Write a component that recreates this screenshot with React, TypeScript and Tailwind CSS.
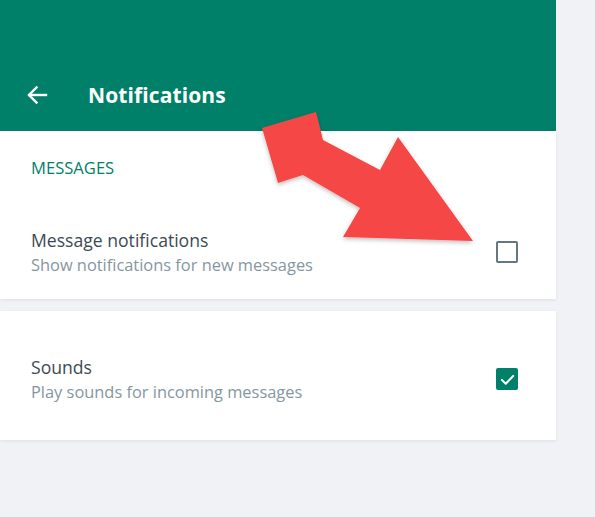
import React from "react";

function Checkbox({ checked }: { checked: boolean }) {
  if (checked) {
    return (
      <div className="w-[22px] h-[22px] rounded-[2px] bg-[#008069] flex items-center justify-center">
        <svg width="17" height="17" viewBox="0 0 24 24" fill="none" stroke="#fff" strokeWidth="2.8" strokeLinecap="round" strokeLinejoin="round">
          <path d="M4 12.5l5.5 5.5L20 7" />
        </svg>
      </div>
    );
  }
  return <div className="w-[22px] h-[22px] rounded-[2px] border-2 border-[#667781]" />;
}

function Row({ title, sub, checked }: { title: string; sub: string; checked: boolean }) {
  return (
    <div className="flex items-center pl-[31px] pr-[38px]">
      <div className="flex-1 flex flex-col">
        <div className="text-[17.6px] leading-[26px] text-[#3b4a54]">{title}</div>
        <div className="text-[16.4px] leading-[24px] text-[#8696a0]">{sub}</div>
      </div>
      <Checkbox checked={checked} />
    </div>
  );
}

export default function App() {
  return (
    <div
      className="relative w-[595px] h-[517px] bg-[#f0f2f5] overflow-hidden"
      style={{ fontFamily: '"Open Sans", "Noto Sans", sans-serif' }}
    >
      <div className="w-[556px] flex flex-col">
        <div className="h-[131px] bg-[#008069] flex items-end pb-[22px] pl-[26px]">
          <div className="flex items-center gap-[40px]">
            <svg width="22" height="20" viewBox="0 0 22 20" fill="none" stroke="#fff" strokeWidth="2.4" strokeLinecap="square">
              <path d="M20 10H3.5" />
              <path d="M10.5 2.5L3 10l7.5 7.5" />
            </svg>
            <div className="text-white text-[21px] font-bold leading-[28px] tracking-[0.1px]">Notifications</div>
          </div>
        </div>
        <div className="bg-white pt-[26px] pb-[22px] shadow-[0_1px_3px_rgba(0,0,0,0.08)]">
          <div className="pl-[31px] text-[16.6px] leading-[22px] text-[#008069] uppercase">Messages</div>
          <div className="mt-[48px]">
            <Row title="Message notifications" sub="Show notifications for new messages" checked={false} />
          </div>
        </div>
        <div className="bg-white mt-[12px] h-[129px] pt-[43px] shadow-[0_1px_3px_rgba(0,0,0,0.08)]">
          <Row title="Sounds" sub="Play sounds for incoming messages" checked={true} />
        </div>
      </div>
      <svg className="absolute left-0 top-0 pointer-events-none" width="595" height="517" viewBox="0 0 595 517">
        <defs>
          <filter id="sh" x="-20%" y="-20%" width="140%" height="140%">
            <feDropShadow dx="0" dy="2" stdDeviation="2" floodColor="#000" floodOpacity="0.25" />
          </filter>
        </defs>
        <polygon
          points="262,128 316,112 323,140 380,170 398,137 473,241 343,237 360,208 303,175 278,183"
          fill="#f64747"
          filter="url(#sh)"
        />
      </svg>
    </div>
  );
}
